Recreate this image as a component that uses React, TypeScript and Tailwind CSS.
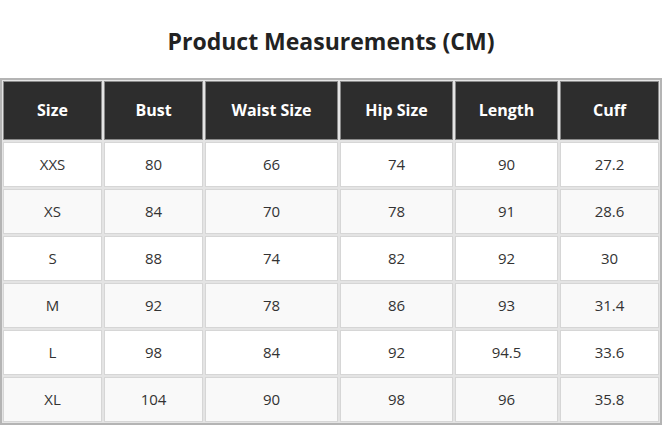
import React from "react";

const headers = ["Size", "Bust", "Waist Size", "Hip Size", "Length", "Cuff"];
const rows = [
  ["XXS", "80", "66", "74", "90", "27.2"],
  ["XS", "84", "70", "78", "91", "28.6"],
  ["S", "88", "74", "82", "92", "30"],
  ["M", "92", "78", "86", "93", "31.4"],
  ["L", "98", "84", "92", "94.5", "33.6"],
  ["XL", "104", "90", "98", "96", "35.8"],
];

export default function App() {
  return (
    <div className="w-[662px] h-[426px] bg-white overflow-hidden" style={{ fontFamily: '"Open Sans", "Noto Sans", sans-serif' }}>
      <div className="pt-[25px] pb-[21px] h-[78px] text-center text-[23px] leading-[32px] font-bold text-[#222]">
        Product Measurements (CM)
      </div>
      <div className="border-2 border-[#b4b4b4] bg-[#e4e4e4] p-[1px] grid grid-cols-[99px_99px_133px_113px_103px_99px] gap-[2px]">
        {headers.map((h) => (
          <div key={h} className="h-[59px] pb-[2px] bg-[#2d2d2d] border border-[#8a8a8a] flex items-center justify-center text-white font-bold text-[16px]">
            {h}
          </div>
        ))}
        {rows.map((r, i) =>
          r.map((c, j) => (
            <div
              key={i + "-" + j}
              className={
                "h-[45px] border border-[#d6d6d6] flex items-center justify-center text-[15px] text-[#333] " +
                (i % 2 === 0 ? "bg-white" : "bg-[#f9f9f9]")
              }
            >
              {c}
            </div>
          ))
        )}
      </div>
    </div>
  );
}
